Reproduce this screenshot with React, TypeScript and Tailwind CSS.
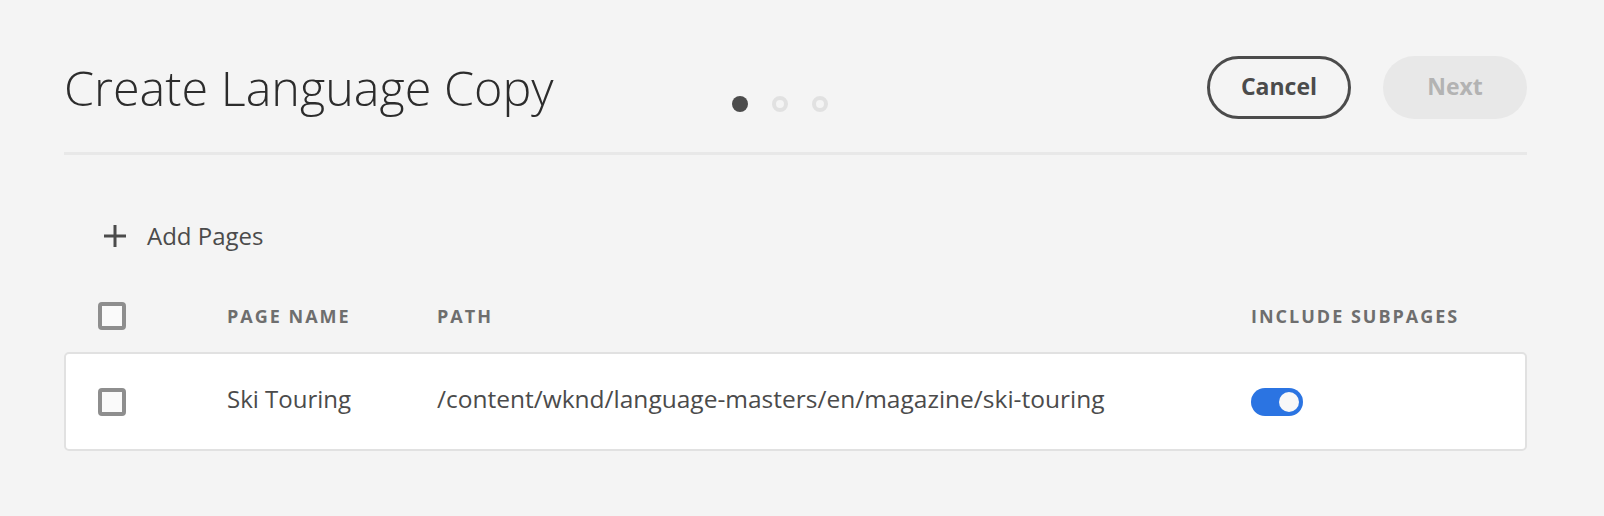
import { useState } from 'react';

const font = { fontFamily: '"Open Sans", "Liberation Sans", sans-serif' };

const Checkbox = () => (
  <div className="w-[28px] h-[28px] rounded-[4px] border-[4px] border-[#8e8e8e] bg-[#fafafa]" />
);

const Toggle = ({ on, onChange }: { on: boolean; onChange: () => void }) => (
  <button
    onClick={onChange}
    className={`relative w-[52px] h-[28px] rounded-full ${on ? 'bg-[#2b74e2]' : 'bg-[#cacaca]'}`}
  >
    <span
      className={`absolute top-[4px] w-[20px] h-[20px] rounded-full bg-[#f8f8f8] ${on ? 'right-[4px]' : 'left-[4px]'}`}
    />
  </button>
);

const App = () => {
  const [subpages, setSubpages] = useState(true);

  return (
    <div style={font} className="min-h-screen w-full bg-[#f4f4f4] pl-[64px] pr-[77px]">
      {/* Header */}
      <div className="flex items-start pt-[56px]">
        <div className="w-[668px] mt-[7px]">
          <h1 className="text-[48.5px] leading-[48px] font-light text-[#2c2c2c] whitespace-nowrap">
            Create Language Copy
          </h1>
        </div>
        <div className="flex gap-[24px] mt-[40px]">
          <span className="w-[16px] h-[16px] rounded-full bg-[#4b4b4b]" />
          <span className="w-[16px] h-[16px] rounded-full border-[4px] border-[#e1e1e1]" />
          <span className="w-[16px] h-[16px] rounded-full border-[4px] border-[#e1e1e1]" />
        </div>
        <div className="ml-auto flex gap-[32px]">
          <button className="w-[144px] h-[63px] pb-[2px] rounded-full border-[3px] border-[#4b4b4b] text-[23px] font-bold text-[#4b4b4b]">
            Cancel
          </button>
          <button className="w-[144px] h-[63px] pb-[2px] rounded-full bg-[#e8e8e8] text-[23px] font-bold text-[#b3b3b3]">
            Next
          </button>
        </div>
      </div>

      <div className="mt-[33px] h-[3px] bg-[#e8e8e8]" />

      {/* Add pages */}
      <div className="mt-[69px] h-[24px] pl-[39px] flex items-center gap-[20px] text-[#4b4b4b]">
        <svg width="24" height="24" viewBox="0 0 24 24" fill="none" stroke="#4b4b4b" strokeWidth="3">
          <path d="M12 1v22M1 12h22" />
        </svg>
        <span className="text-[24px] leading-[24px]">Add Pages</span>
      </div>

      {/* Table header */}
      <div className="mt-[48px] h-[40px] pl-[34px] flex items-center text-[18px] font-bold tracking-[2px] text-[#6e6e6e]">
        <div className="w-[129px]">
          <Checkbox />
        </div>
        <div className="w-[210px]">PAGE NAME</div>
        <div className="w-[814px]">PATH</div>
        <div>INCLUDE SUBPAGES</div>
      </div>

      {/* Row */}
      <div className="mt-[16px] h-[99px] rounded-[5px] border-2 border-[#e1e1e1] bg-white pl-[32px] flex items-center text-[24px] text-[#4b4b4b]">
        <div className="w-[129px]">
          <Checkbox />
        </div>
        <div className="w-[210px] pb-[5px]">Ski Touring</div>
        <div className="w-[814px] pb-[5px] text-[24.5px]">/content/wknd/language-masters/en/magazine/ski-touring</div>
        <Toggle on={subpages} onChange={() => setSubpages(!subpages)} />
      </div>
    </div>
  );
};

export default App;
